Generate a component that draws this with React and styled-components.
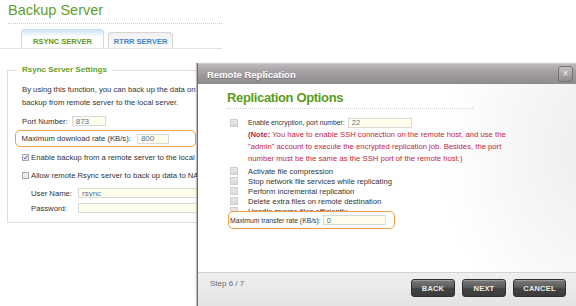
import React from "react";
import styled, { createGlobalStyle } from "styled-components";

const GlobalStyle = createGlobalStyle`
  html, body {
    margin: 0;
    padding: 0;
    background: #fff;
  }
  body {
    font-family: "Liberation Sans", Arial, sans-serif;
  }
`;

const Screen = styled.div`
  position: relative;
  width: 576px;
  height: 306px;
  overflow: hidden;
  background: #fff;
`;

/* ---------- backup server page ---------- */

const Page = styled.div`
  width: 230px;
`;

const PageTitle = styled.h1`
  margin: 0;
  padding-left: 8px;
  height: 20px;
  font-size: 14.5px;
  line-height: 20px;
  font-weight: normal;
  color: #62a02e;
`;

const DottedRule = styled.div`
  margin: ${(p) => p.$mt || 0}px 0 0 ${(p) => p.$ml || 0}px;
  width: ${(p) => p.$w}px;
  border-top: 1px dotted #cfcfcf;
`;

const TabBar = styled.div`
  display: flex;
  align-items: flex-end;
  gap: 4px;
  margin-top: 5px;
  padding-left: 21px;
  width: 201px;
  height: 19px;
  border-bottom: 1px solid #e2e2e2;
`;

const Tab = styled.div`
  box-sizing: border-box;
  display: flex;
  align-items: flex-end;
  justify-content: center;
  width: ${(p) => p.$w}px;
  height: ${(p) => (p.$active ? 19 : 16)}px;
  padding-bottom: 1px;
  border: 1px solid ${(p) => (p.$active ? "#c6dcee" : "#d4d4d4")};
  border-bottom: none;
  border-radius: 4px 4px 0 0;
  background: ${(p) =>
    p.$active
      ? "linear-gradient(#cfe4f4 0, #e4f0f9 3px, #fff 7px)"
      : "linear-gradient(#f1f1f1, #fbfbfb)"};
  color: ${(p) => (p.$active ? "#5e9a22" : "#3f84c4")};
  font-size: 7.5px;
  line-height: 10px;
  font-weight: bold;
`;

/* the right part of the settings box sits under the dialog, so it is clipped there */
const Settings = styled.fieldset`
  box-sizing: border-box;
  width: 192px;
  margin: 16px 0 0 7px;
  padding: 8px 0 7px 14px;
  min-width: 0;
  overflow: hidden;
  border: 1px solid #dddddd;
`;

const Legend = styled.legend`
  margin-left: -5px;
  padding: 0 5px;
  height: 10px;
  font-size: 8px;
  line-height: 10px;
  font-weight: bold;
  color: #66a02a;
`;

const Desc = styled.div`
  font-size: 7.7px;
  line-height: 13px;
  color: #333;
  white-space: nowrap;
`;

const Row = styled.div`
  display: flex;
  align-items: center;
  height: 14px;
  margin-top: ${(p) => p.$mt || 0}px;
  padding-left: ${(p) => p.$indent || 0}px;
  font-size: 7.7px;
  color: #333;
  white-space: nowrap;
`;

const Label = styled.span`
  width: ${(p) => (p.$w ? `${p.$w}px` : "auto")};
  margin-right: ${(p) => p.$gap || 0}px;
  font-size: ${(p) => (p.$fs ? `${p.$fs}px` : "inherit")};
  flex-shrink: 0;
`;

const Field = styled.input`
  box-sizing: border-box;
  width: ${(p) => p.$w}px;
  height: 10px;
  padding: 0 3px;
  border: 1px solid #d9d9d9;
  background: #fffdec;
  font-family: "Liberation Sans", Arial, sans-serif;
  font-size: ${(p) => p.$fs || 8}px;
  color: #54709c;
  outline: none;
  flex-shrink: 0;
`;

const Highlight = styled.div`
  box-sizing: border-box;
  display: flex;
  align-items: center;
  width: ${(p) => p.$w}px;
  height: ${(p) => p.$h}px;
  margin: ${(p) => p.$mt || 0}px 0 0 ${(p) => p.$ml || 0}px;
  padding-left: ${(p) => p.$pl || 0}px;
  border: 1.5px solid #f0a04a;
  border-radius: 5px;
  background: #fff;
  position: relative;
  font-size: ${(p) => p.$fs || 7.7}px;
  color: #333;
  white-space: nowrap;
`;

const Check = styled.span`
  box-sizing: border-box;
  display: inline-flex;
  align-items: center;
  justify-content: center;
  width: ${(p) => p.$size || 7}px;
  height: ${(p) => p.$size || 7}px;
  margin-right: ${(p) => p.$gap || 3}px;
  border: 1px solid ${(p) => (p.$muted ? "#cfcfcf" : "#a9a9a9")};
  background: ${(p) =>
    p.$muted ? "linear-gradient(#e9e9e9, #d9d9d9)" : "linear-gradient(#f4f4f4, #e2e2e2)"};
  flex-shrink: 0;
`;

/* ---------- remote replication dialog ---------- */

const Dialog = styled.div`
  position: absolute;
  left: 197px;
  top: 63px;
  width: 379px;
  height: 260px;
  display: flex;
  flex-direction: column;
  border-left: 1px solid #6e6e6e;
  box-shadow: -1px 0 1px rgba(0, 0, 0, 0.25);
  background: #fff;
`;

const TitleBar = styled.div`
  display: flex;
  align-items: center;
  justify-content: space-between;
  height: 21px;
  padding: 0 4px 0 9px;
  background: linear-gradient(#bdb9bd 0%, #a19da1 45%, #8e8a8e 100%);
  border-top: 1px solid #d2cfd2;
  box-sizing: border-box;
`;

const TitleText = styled.span`
  color: #fff;
  font-size: 9.5px;
  font-weight: bold;
  text-shadow: 0 1px 0 rgba(0, 0, 0, 0.25);
`;

const CloseButton = styled.div`
  box-sizing: border-box;
  display: flex;
  align-items: center;
  justify-content: center;
  width: 15px;
  height: 16px;
  border: 1px solid #747074;
  border-radius: 3px;
  background: linear-gradient(#c4c0c4, #8f8b8f);
  color: #f2f2f2;
  font-size: 10px;
  line-height: 1;
`;

const Body = styled.div`
  height: 188px;
  padding: 5px 0 0 29px;
  box-sizing: border-box;
  background: radial-gradient(ellipse 220px 260px at 108% 35%, #ececec 0%, #f7f7f7 45%, #fff 75%);
`;

const Heading = styled.div`
  font-size: 13px;
  line-height: 18px;
  font-weight: bold;
  letter-spacing: -0.35px;
  color: #5c9b1e;
`;

const Options = styled.div`
  padding-left: 3px;
  font-size: 7.7px;
  color: #333;
`;

const OptRow = styled.div`
  display: flex;
  align-items: center;
  height: ${(p) => p.$h || 10}px;
  margin-top: ${(p) => p.$mt || 0}px;
  white-space: nowrap;
`;

const Note = styled.div`
  margin: 1px 0 0 18px;
  font-size: 7.7px;
  line-height: 12px;
  color: #c1263e;
  white-space: nowrap;
`;

const Footer = styled.div`
  flex: 1;
  display: flex;
  align-items: flex-start;
  justify-content: space-between;
  padding: 0 11px 0 12px;
  border-top: 1px solid #d3d3d3;
  background: linear-gradient(#efefef, #dedede);
`;

const StepText = styled.span`
  margin-top: 6px;
  font-size: 8px;
  line-height: 10px;
  color: #6b6b6b;
`;

const ButtonGroup = styled.div`
  display: flex;
  gap: 7px;
  margin-top: 6px;
`;

const Button = styled.div`
  box-sizing: border-box;
  display: flex;
  align-items: center;
  justify-content: center;
  width: ${(p) => p.$w}px;
  height: 18px;
  border: 1px solid #2f2f2f;
  border-radius: 3px;
  background: linear-gradient(#7a7a7a 0%, #5c5c5c 45%, #434343 55%, #3b3b3b 100%);
  box-shadow: inset 0 1px 0 rgba(255, 255, 255, 0.25);
  color: #ededed;
  font-size: 7.5px;
  font-weight: bold;
  letter-spacing: 0.2px;
`;

const CheckMark = () => (
  <svg width="7" height="7" viewBox="0 0 7 7">
    <path d="M1 3.6 L2.8 5.4 L6.2 0.8" fill="none" stroke="#3a63b8" strokeWidth="1.4" />
  </svg>
);

const options = [
  "Activate file compression",
  "Stop network file services while replicating",
  "Perform incremental replication",
  "Delete extra files on remote destination",
  "Handle sparse files efficiently",
];

const App = () => {
  return (
    <Screen>
      <GlobalStyle />
      <Page>
        <PageTitle>Backup Server</PageTitle>
        <DottedRule $mt={3} $ml={8} $w={214} />
        <TabBar>
          <Tab $active $w={83}>RSYNC SERVER</Tab>
          <Tab $w={65}>RTRR SERVER</Tab>
        </TabBar>
        <Settings>
          <Legend>Rsync Server Settings</Legend>
          <Desc>
            By using this function, you can back up the data on the
            <br />
            backup from remote server to the local server.
          </Desc>
          <Row $mt={5}>
            <Label $gap={4}>Port Number:</Label>
            <Field $w={34} value="873" readOnly />
          </Row>
          <Highlight $w={181} $h={17} $mt={2} $ml={-7} $pl={5.5}>
            <Label $gap={6}>Maximum download rate (KB/s):</Label>
            <Field $w={32} value="800" readOnly />
          </Highlight>
          <Row $mt={3}>
            <Check $size={7} $gap={2}>
              <CheckMark />
            </Check>
            Enable backup from a remote server to the local
          </Row>
          <Row $mt={4}>
            <Check $size={7} $gap={2} />
            Allow remote Rsync server to back up data to NAS
          </Row>
          <Row $mt={4} $indent={9}>
            <Label $w={47}>User Name:</Label>
            <Field $w={240} value="rsync" readOnly />
          </Row>
          <Row $mt={1} $indent={9}>
            <Label $w={47}>Password:</Label>
            <Field $w={240} value="" readOnly />
          </Row>
        </Settings>
      </Page>

      <Dialog>
        <TitleBar>
          <TitleText>Remote Replication</TitleText>
          <CloseButton>×</CloseButton>
        </TitleBar>
        <Body>
          <Heading>Replication Options</Heading>
          <DottedRule $mt={1} $w={246} />
          <Options>
            <OptRow $h={11} $mt={8}>
              <Check $muted $size={8} $gap={10} />
              <Label $gap={3} $fs={6.8}>Enable encryption, port number:</Label>
              <Field $w={64} $fs={7.5} value="22" readOnly />
            </OptRow>
            <Note>
              <b>(Note:</b> You have to enable SSH connection on the remote host, and use the
              <br />
              "admin" account to execute the encrypted replication job. Besides, the port
              <br />
              number must be the same as the SSH port of the remote host.)
            </Note>
            {options.map((text, i) => (
              <OptRow key={text} $mt={i === 0 ? 1 : 0}>
                <Check $muted $size={8} $gap={10} />
                {text}
              </OptRow>
            ))}
            <Highlight $w={167} $h={18} $mt={-5} $ml={-2} $pl={1} $fs={6.8}>
              <Label $gap={2}>Maximum transfer rate (KB/s):</Label>
              <Field $w={63} $fs={7.5} value="0" readOnly />
            </Highlight>
          </Options>
        </Body>
        <Footer>
          <StepText>Step 6 / 7</StepText>
          <ButtonGroup>
            <Button $w={44}>BACK</Button>
            <Button $w={44}>NEXT</Button>
            <Button $w={53}>CANCEL</Button>
          </ButtonGroup>
        </Footer>
      </Dialog>
    </Screen>
  );
};

export default App;
